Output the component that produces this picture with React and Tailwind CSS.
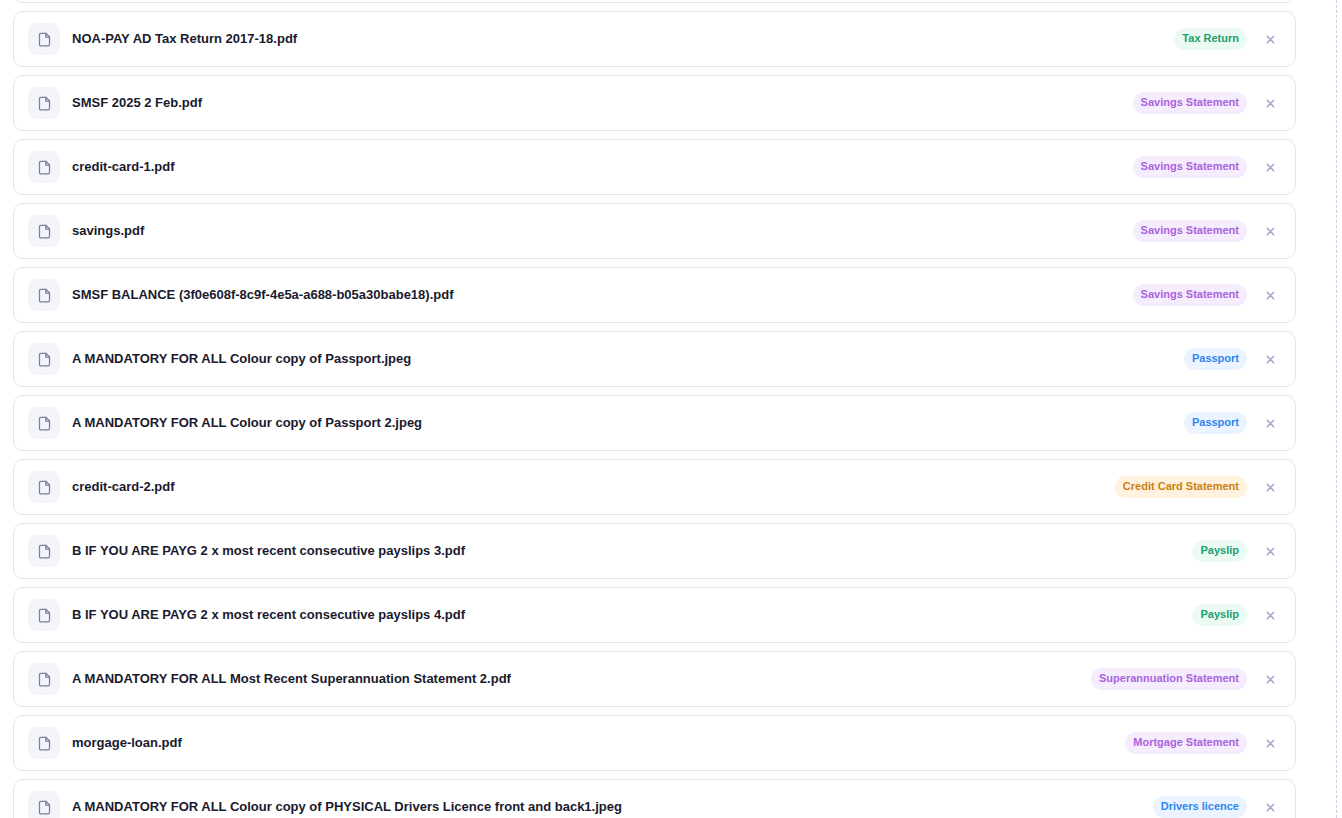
import React from "react";

const TONES = {
  green: "bg-[#ebfbf4] text-[#20a06c]",
  purple: "bg-[#f5ecfe] text-[#a964dc]",
  blue: "bg-[#eaf3ff] text-[#2f88ee]",
  amber: "bg-[#fff2de] text-[#cb7f12]",
};

const FILES = [
  { name: "NOA-PAY AD Tax Return 2017-18.pdf", type: "Tax Return", tone: "green" },
  { name: "SMSF 2025 2 Feb.pdf", type: "Savings Statement", tone: "purple" },
  { name: "credit-card-1.pdf", type: "Savings Statement", tone: "purple" },
  { name: "savings.pdf", type: "Savings Statement", tone: "purple" },
  { name: "SMSF BALANCE (3f0e608f-8c9f-4e5a-a688-b05a30babe18).pdf", type: "Savings Statement", tone: "purple" },
  { name: "A MANDATORY FOR ALL Colour copy of Passport.jpeg", type: "Passport", tone: "blue" },
  { name: "A MANDATORY FOR ALL Colour copy of Passport 2.jpeg", type: "Passport", tone: "blue" },
  { name: "credit-card-2.pdf", type: "Credit Card Statement", tone: "amber" },
  { name: "B IF YOU ARE PAYG 2 x most recent consecutive payslips 3.pdf", type: "Payslip", tone: "green" },
  { name: "B IF YOU ARE PAYG 2 x most recent consecutive payslips 4.pdf", type: "Payslip", tone: "green" },
  { name: "A MANDATORY FOR ALL Most Recent Superannuation Statement 2.pdf", type: "Superannuation Statement", tone: "purple" },
  { name: "morgage-loan.pdf", type: "Mortgage Statement", tone: "purple" },
  { name: "A MANDATORY FOR ALL Colour copy of PHYSICAL Drivers Licence front and back1.jpeg", type: "Drivers licence", tone: "blue" },
];

function FileIcon() {
  return (
    <svg width="15" height="15" viewBox="0 0 24 24" fill="none" stroke="#7480a0" strokeWidth="2" strokeLinecap="round" strokeLinejoin="round" aria-hidden="true">
      <path d="M14 2H6a2 2 0 0 0-2 2v16a2 2 0 0 0 2 2h12a2 2 0 0 0 2-2V8z" />
      <path d="M14 2v6h6" />
    </svg>
  );
}

function CloseIcon() {
  return (
    <svg width="13" height="13" viewBox="0 0 24 24" fill="none" stroke="#94a3c4" strokeWidth="2.5" strokeLinecap="round" aria-hidden="true">
      <path d="M18 6L6 18M6 6l12 12" />
    </svg>
  );
}

function FileRow({ file }) {
  return (
    <li className="flex min-h-14 items-center gap-3 rounded-[10px] border border-[#e2e5f0] bg-white px-3.5">
      <span className="flex size-8 shrink-0 items-center justify-center rounded-lg bg-[#f4f5fa]">
        <FileIcon />
      </span>
      <span className="min-w-0 flex-1 truncate text-[13px] leading-5 font-bold text-[#1a1a2e]">{file.name}</span>
      <span className={`shrink-0 rounded-full px-2 pt-0.5 pb-1 text-[11px] leading-4 font-bold ${TONES[file.tone]}`}>
        {file.type}
      </span>
      <button type="button" aria-label={`Remove ${file.name}`} className="flex size-[22px] shrink-0 items-center justify-center rounded">
        <CloseIcon />
      </button>
    </li>
  );
}

export default function App() {
  return (
    <main className="h-screen overflow-hidden bg-white pr-[5px] font-['Liberation_Sans',Arial,sans-serif]">
      <div className="h-full border-r border-dashed border-[#c9d0e8] pr-10 pl-[13px]">
        <div className="h-[3px] overflow-hidden">
          <div className="-mt-[53px] h-14 rounded-[10px] border border-[#e2e5f0]" />
        </div>
        <ul className="mt-2 flex flex-col gap-2">
          {FILES.map((file) => (
            <FileRow key={file.name} file={file} />
          ))}
        </ul>
      </div>
    </main>
  );
}
